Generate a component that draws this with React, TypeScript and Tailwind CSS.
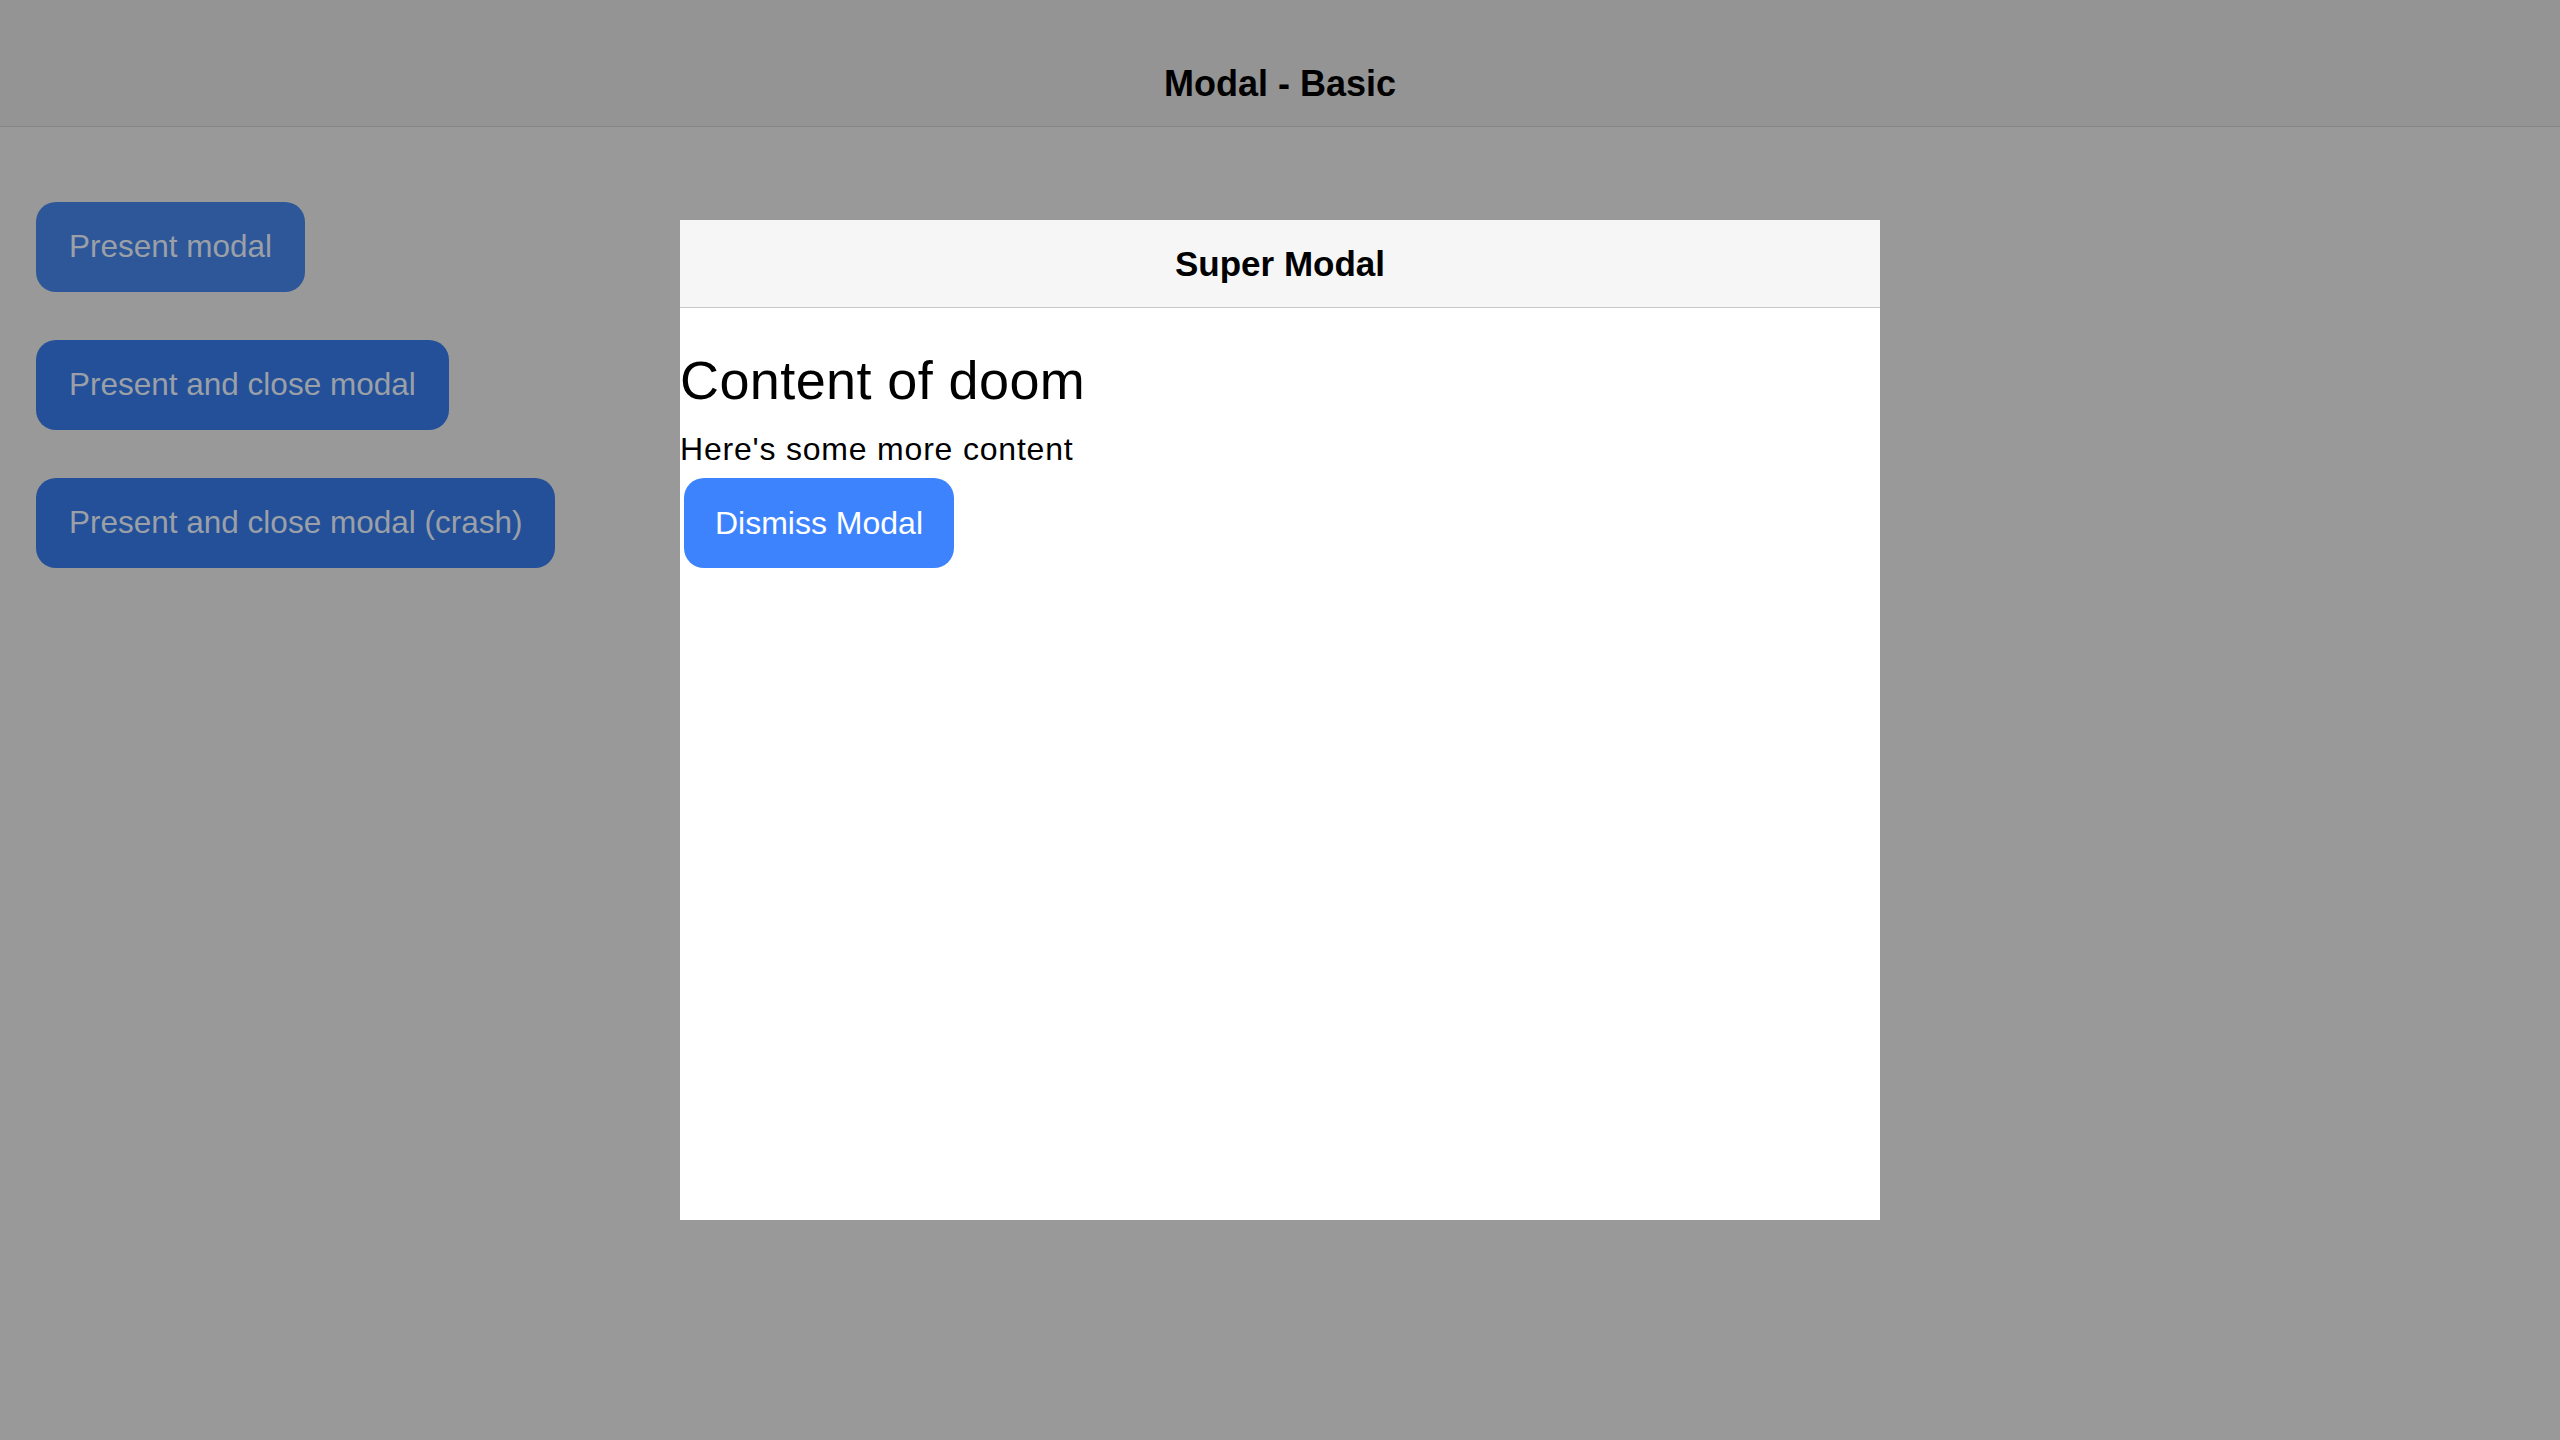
import React from 'react';

const ACTIONS = [
  { id: 'present', label: 'Present modal', bg: 'bg-[#2e5799]' },
  { id: 'present-close', label: 'Present and close modal', bg: 'bg-[#235098]' },
  { id: 'present-close-crash', label: 'Present and close modal (crash)', bg: 'bg-[#235098]' },
];

export default function App() {
  return (
    <div className="relative min-h-screen h-[1440px] bg-[#999999] font-['Liberation_Sans',Arial,sans-serif] text-black overflow-hidden">
      {/* Nav bar (dimmed by backdrop) */}
      <header className="h-[127px] pt-[42px] bg-[#949494] border-b border-[#858585] flex items-center justify-center">
        <h1 className="text-[36px] font-bold leading-none">Modal - Basic</h1>
      </header>

      {/* Page buttons */}
      <main className="pl-[36px] pt-[75px] flex flex-col items-start gap-[48px]">
        {ACTIONS.map((a) => (
          <button
            key={a.id}
            className={`${a.bg} h-[90px] px-[33px] rounded-[20px] text-[31.5px] text-[#9ba0a8] leading-none flex items-center`}
          >
            {a.label}
          </button>
        ))}
      </main>

      {/* Modal */}
      <div className="absolute inset-0 flex items-center justify-center">
        <div className="w-[1200px] h-[1000px] bg-white flex flex-col">
          <div className="h-[88px] bg-[#f6f6f6] border-b border-[#c8c8c8] flex items-center justify-center">
            <h2 className="text-[35px] font-bold leading-none">Super Modal</h2>
          </div>
          <div className="flex flex-col items-start">
            <h3 className="mt-[42px] text-[54px] leading-[60px] tracking-[0.4px]">Content of doom</h3>
            <p className="mt-[21px] text-[32px] leading-[36px] tracking-[0.8px]">Here's some more content</p>
            <button className="mt-[11px] ml-[4px] h-[90px] w-[270px] rounded-[20px] bg-[#3d83fe] text-white text-[32px] leading-none flex items-center justify-center">
              Dismiss Modal
            </button>
          </div>
        </div>
      </div>
    </div>
  );
}
